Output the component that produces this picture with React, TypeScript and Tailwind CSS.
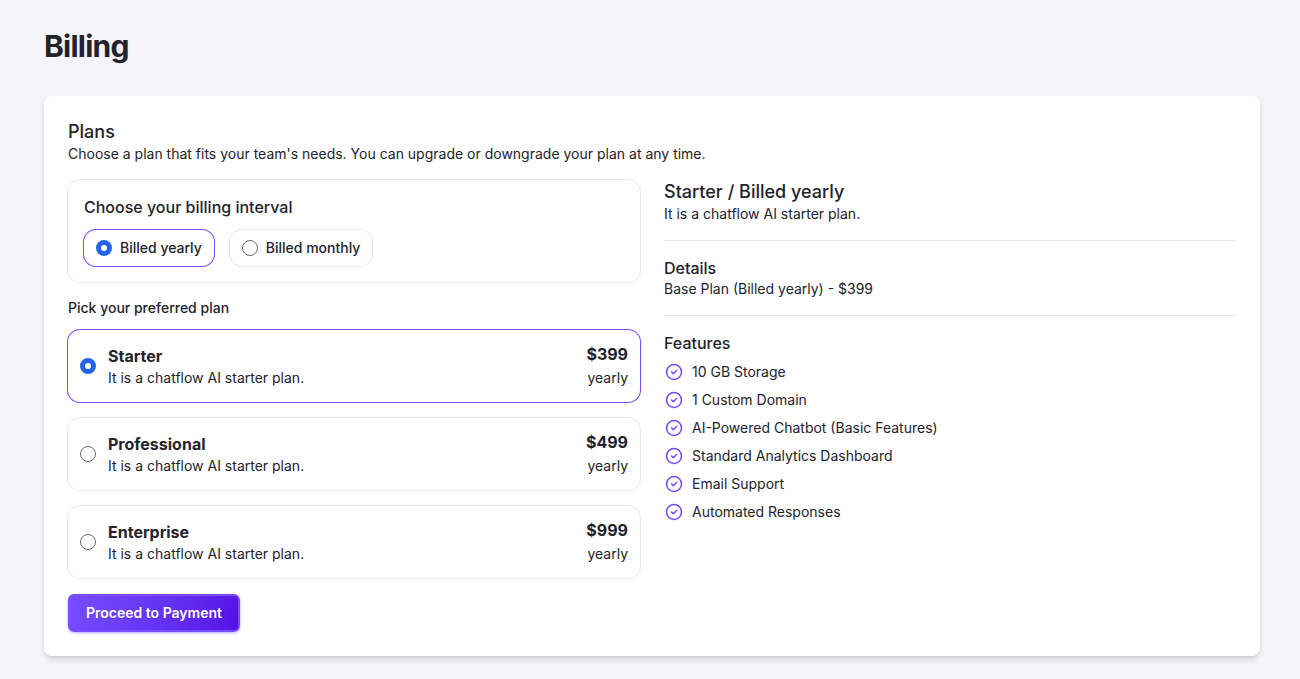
import { useState } from "react";

type Interval = "yearly" | "monthly";

const intervals: { id: Interval; label: string }[] = [
  { id: "yearly", label: "Billed yearly" },
  { id: "monthly", label: "Billed monthly" },
];

const plans = [
  { id: "starter", name: "Starter", desc: "It is a chatflow AI starter plan.", price: 399 },
  { id: "professional", name: "Professional", desc: "It is a chatflow AI starter plan.", price: 499 },
  { id: "enterprise", name: "Enterprise", desc: "It is a chatflow AI starter plan.", price: 999 },
];

const features = [
  "10 GB Storage",
  "1 Custom Domain",
  "AI-Powered Chatbot (Basic Features)",
  "Standard Analytics Dashboard",
  "Email Support",
  "Automated Responses",
];

const radioClass =
  "size-4 shrink-0 appearance-none rounded-full border border-[#6b6b80] bg-white checked:border-[5px] checked:border-[#2563eb]";

function CheckCircle() {
  return (
    <svg viewBox="0 0 20 20" fill="none" stroke="currentColor" strokeWidth="1.6" strokeLinecap="round" strokeLinejoin="round" className="size-5 shrink-0 text-[#774dff]" aria-hidden="true">
      <circle cx="10" cy="10" r="7.5" />
      <path d="M7.4 10l1.9 1.7 3.3-3.2" />
    </svg>
  );
}

export default function App() {
  const [interval, setInterval] = useState<Interval>("yearly");
  const [planId, setPlanId] = useState("starter");
  const plan = plans.find((p) => p.id === planId) ?? plans[0];

  return (
    <main className="min-h-screen bg-[#f5f4fa] pt-7 pr-10 pb-6 pl-11 font-['Inter',sans-serif] text-sm text-[#23232b]">
      <h1 className="mb-8 text-3xl font-bold tracking-tight">Billing</h1>

      <div className="rounded-lg bg-white p-6 shadow-[0_4px_6px_-1px_rgba(35,35,50,0.16),0_2px_4px_-2px_rgba(35,35,50,0.12)]">
        <h2 className="text-lg leading-6 font-medium">Plans</h2>
        <p>Choose a plan that fits your team's needs. You can upgrade or downgrade your plan at any time.</p>

        <div className="mt-4 grid grid-cols-2 items-start gap-6">
          <form onSubmit={(e) => e.preventDefault()}>
            <fieldset className="rounded-xl p-4 ring-1 ring-[#ebebef]">
              <legend className="float-left mb-3 w-full text-base leading-[22px] font-medium">Choose your billing interval</legend>
              <div className="clear-both flex gap-4">
                {intervals.map((item) => (
                  <label
                    key={item.id}
                    className="flex h-9 items-center gap-2 rounded-xl px-3 font-medium ring-1 ring-[#ebebef] has-checked:ring-[#774dff]"
                  >
                    <input
                      type="radio"
                      name="interval"
                      className={radioClass}
                      checked={interval === item.id}
                      onChange={() => setInterval(item.id)}
                    />
                    {item.label}
                  </label>
                ))}
              </div>
            </fieldset>

            {/* Plan cards */}
            <fieldset className="mt-4">
              <legend className="mb-3 font-medium">Pick your preferred plan</legend>
              <div className="flex flex-col gap-4">
                {plans.map((p) => (
                  <label
                    key={p.id}
                    className="flex items-center gap-3 rounded-xl p-3 ring-1 ring-[#ebebef] has-checked:ring-[#774dff]"
                  >
                    <input
                      type="radio"
                      name="plan"
                      className={radioClass}
                      checked={planId === p.id}
                      onChange={() => setPlanId(p.id)}
                    />
                    <span className="flex-1">
                      <span className="block text-base font-bold">{p.name}</span>
                      <span className="block">{p.desc}</span>
                    </span>
                    <span className="text-right">
                      <span className="block text-base font-bold">${p.price}</span>
                      <span className="block leading-6">{interval}</span>
                    </span>
                  </label>
                ))}
              </div>
            </fieldset>

            <button
              type="submit"
              className="mt-4 flex rounded-md border-2 border-[#774dff] bg-linear-105 from-[#774dff] to-[#560ee6] px-4 py-[7px] font-semibold text-white shadow-[0_1px_3px_rgba(119,77,255,0.5)]"
            >
              Proceed to Payment
            </button>
          </form>

          {/* Summary of the selected plan */}
          <div className="divide-y divide-[#e8e8ec]">
            <section className="pb-4">
              <h2 className="text-lg leading-6 font-medium">
                {plan.name} / Billed {interval}
              </h2>
              <p>{plan.desc}</p>
            </section>
            <section className="py-4">
              <h3 className="text-base leading-[22px] font-medium">Details</h3>
              <p>
                Base Plan (Billed {interval}) - ${plan.price}
              </p>
            </section>
            <section className="pt-4">
              <h3 className="text-base leading-[22px] font-medium">Features</h3>
              <ul className="mt-2 flex flex-col gap-2">
                {features.map((f) => (
                  <li key={f} className="flex items-center gap-2">
                    <CheckCircle />
                    {f}
                  </li>
                ))}
              </ul>
            </section>
          </div>
        </div>
      </div>
    </main>
  );
}
